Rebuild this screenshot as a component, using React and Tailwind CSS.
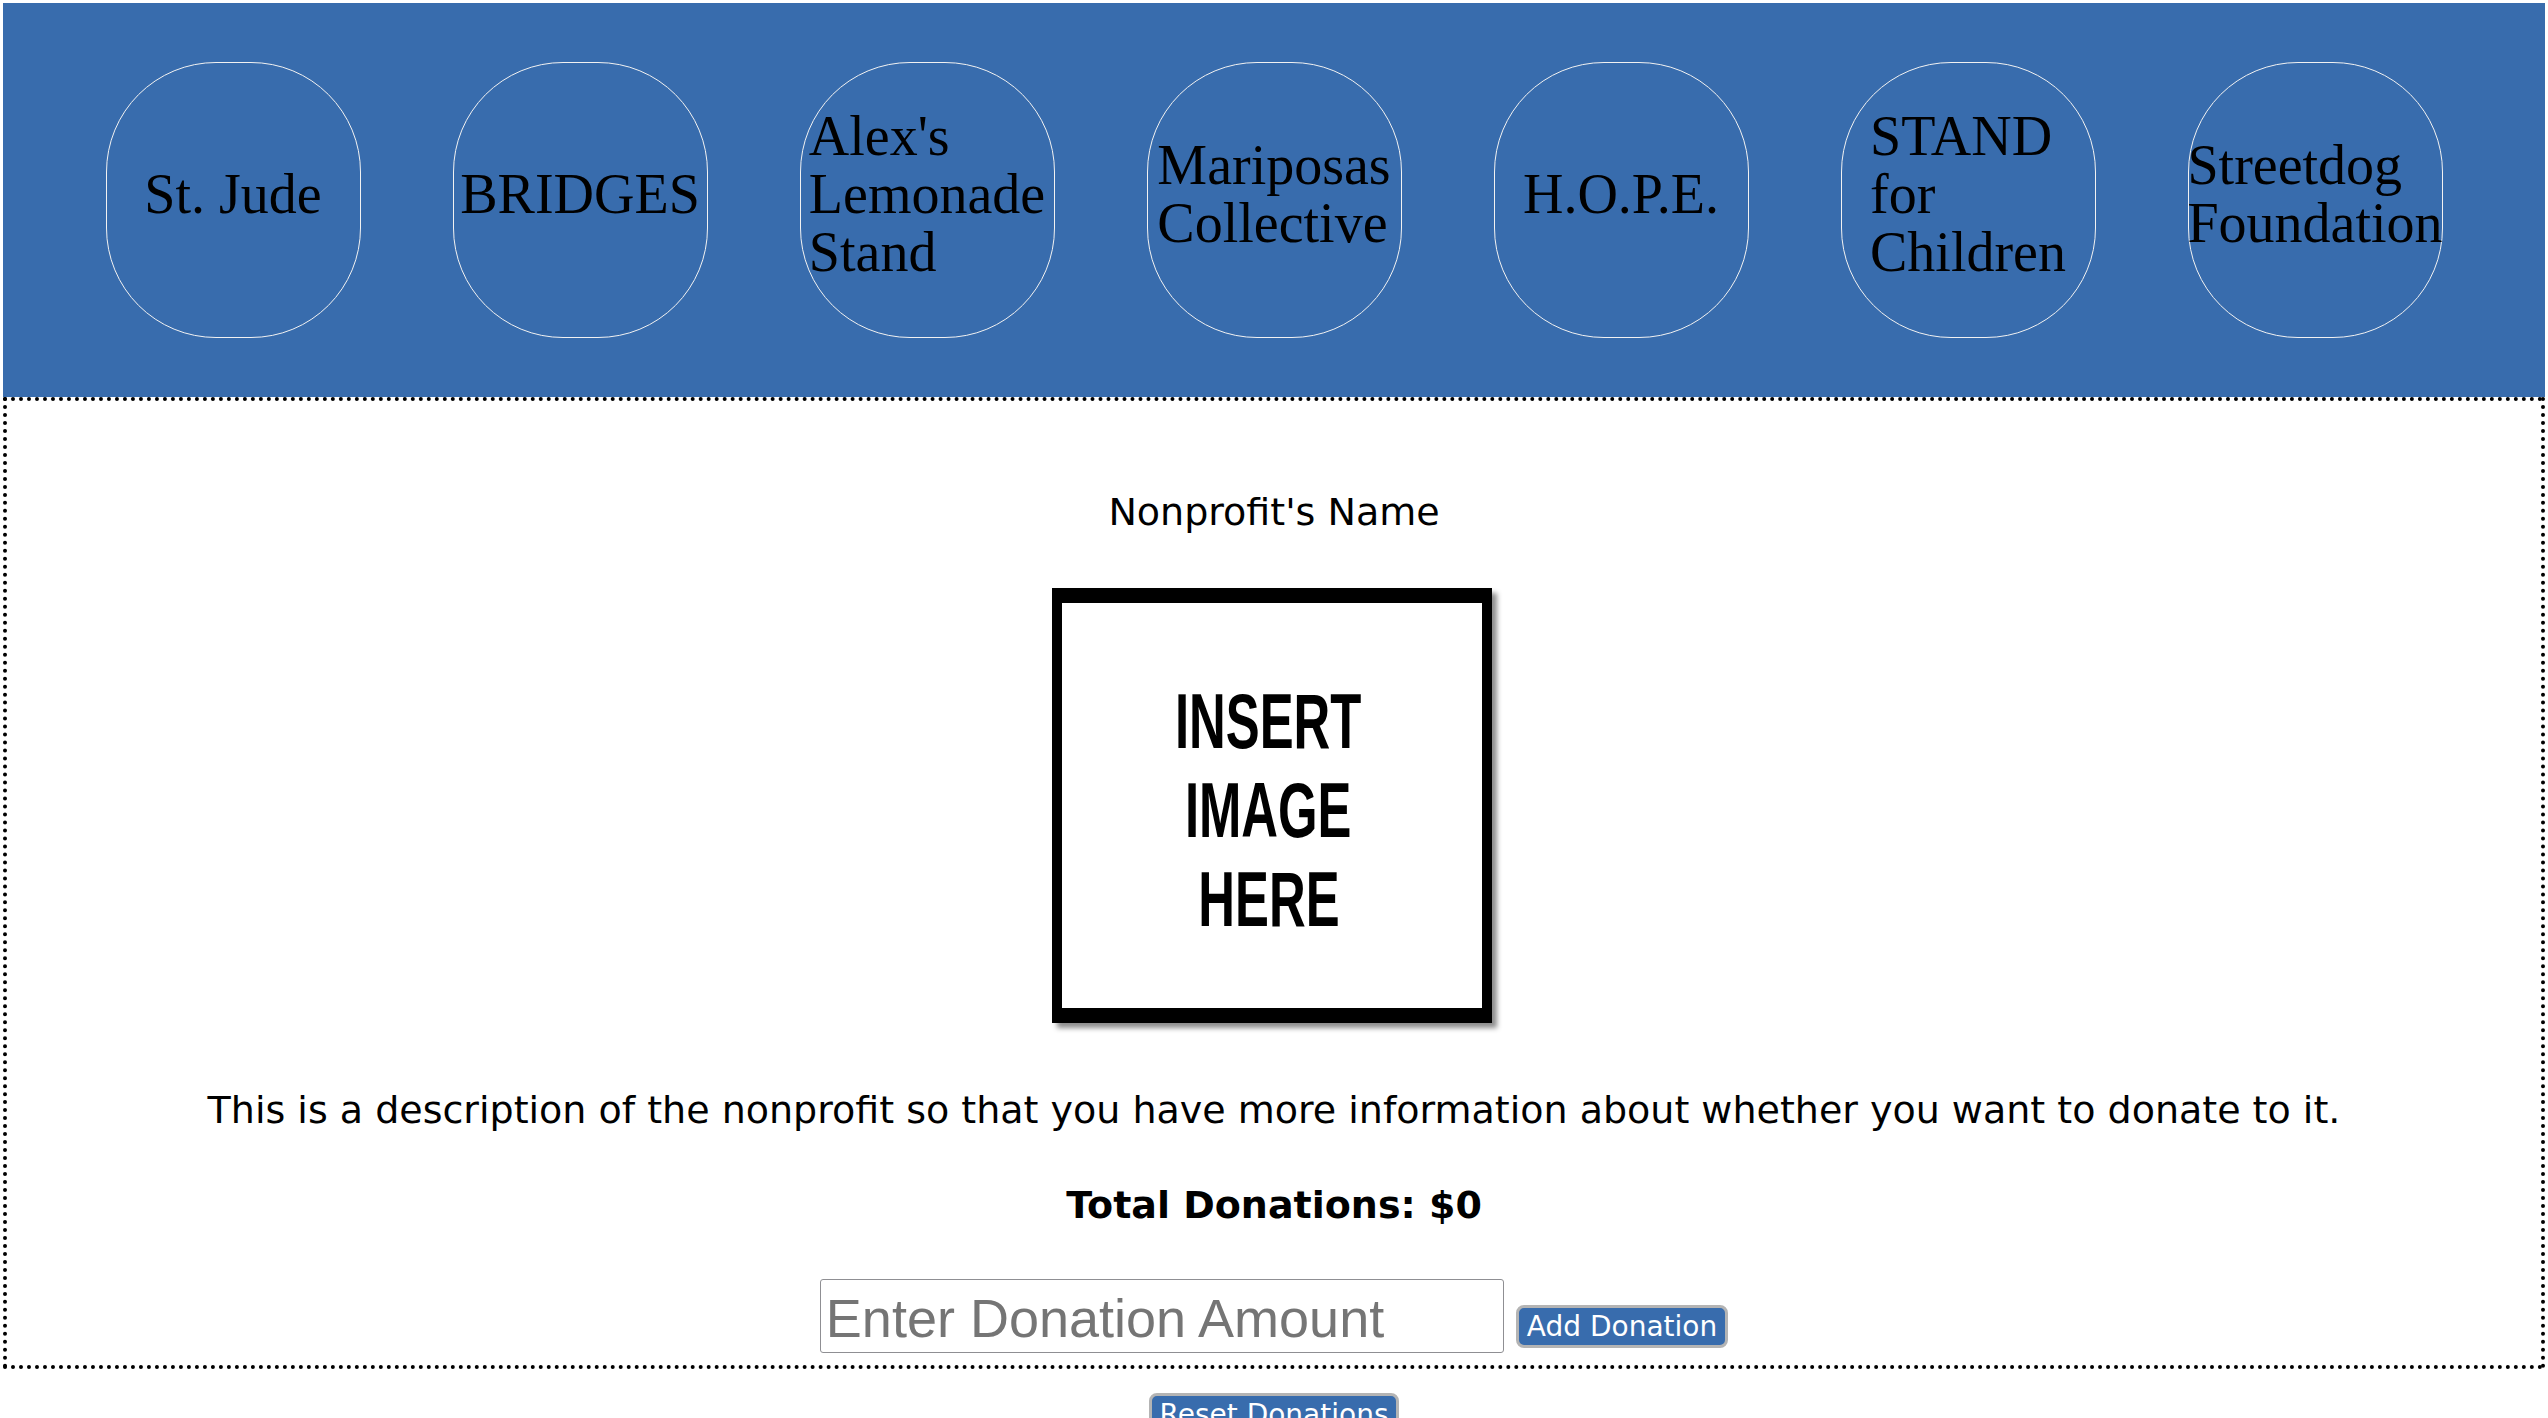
import React, { useState } from "react";

const NONPROFITS = [
  { id: "stjude", lines: ["St. Jude"] },
  { id: "bridges", lines: ["BRIDGES"] },
  { id: "alex", lines: ["Alex's", "Lemonade", "Stand"] },
  { id: "mariposas", lines: ["Mariposas", "Collective"] },
  { id: "hope", lines: ["H.O.P.E."] },
  { id: "stand", lines: ["STAND", "for", "Children"] },
  { id: "streetdog", lines: ["Streetdog", "Foundation"] },
];

const verdana = "font-['DejaVu_Sans','Liberation_Sans',sans-serif]";

function NonprofitButton({ np, onSelect }) {
  return (
    <button
      type="button"
      onClick={() => onSelect(np.id)}
      className="w-[255px] h-[276px] shrink-0 rounded-[110px] border border-[#f2f2f2] flex items-center justify-center pb-3 bg-transparent"
    >
      <span className="inline-block text-left text-black font-['Liberation_Serif',serif] text-[56px] leading-[58px] whitespace-nowrap">
        {np.lines.map((l) => (
          <span key={l} className="block">{l}</span>
        ))}
      </span>
    </button>
  );
}

export default function App() {
  const [selected, setSelected] = useState(null);
  const [amount, setAmount] = useState("");
  const [total, setTotal] = useState(0);

  function addDonation() {
    const n = parseFloat(amount);
    if (!isNaN(n) && n > 0) setTotal((t) => t + n);
    setAmount("");
  }

  return (
    <div className="min-h-screen bg-white px-[3px] pt-[3px]">
      {/* Nonprofit picker */}
      <div className="h-[394px] bg-[#386cad] flex items-center justify-center gap-[92px]">
        {NONPROFITS.map((np) => (
          <NonprofitButton key={np.id} np={np} onSelect={setSelected} />
        ))}
      </div>

      {/* Detail panel */}
      <div className={`border-[4px] border-dotted border-black flex flex-col items-center pt-[89px] pb-[12px] text-black ${verdana}`}>
        <div className="text-[38px] leading-[44px]">Nonprofit's Name</div>

        <div className="mt-[54px] mr-[5px] w-[440px] h-[435px] bg-white border-x-[10px] border-y-[15px] border-black shadow-[5px_5px_5px_rgba(0,0,0,0.45)] flex flex-col items-center justify-center pt-[10px] pr-[6px]">
          {["INSERT", "IMAGE", "HERE"].map((w) => (
            <div
              key={w}
              className="font-['Liberation_Sans',sans-serif] font-bold text-[77px] leading-[89px] scale-x-[0.66]"
            >
              {w}
            </div>
          ))}
        </div>

        <p className="mt-[65px] text-[38px] leading-[44px]">
          This is a description of the nonprofit so that you have more information about whether you want to donate to it.
        </p>

        <div className="mt-[51px] text-[38px] leading-[44px] font-bold">Total Donations: ${total}</div>

        <div className="mt-[52px] flex items-end gap-[12px]">
          <input
            type="text"
            value={amount}
            onChange={(e) => setAmount(e.target.value)}
            placeholder="Enter Donation Amount"
            className="w-[684px] h-[74px] border border-[#8f8f93] rounded-[3px] px-[5px] pt-[4px] font-['Liberation_Sans',sans-serif] text-[54px] text-black placeholder:text-[#757575] outline-none"
          />
          <button
            type="button"
            onClick={addDonation}
            className="mb-[5px] h-[43px] px-[8px] rounded-[8px] border-[3px] border-[#b4b4b4] bg-[#386cad] text-white text-[28px] leading-[30px]"
          >
            Add Donation
          </button>
        </div>
      </div>

      <div className={`flex justify-center mt-[24px] ${verdana}`}>
        <button
          type="button"
          onClick={() => setTotal(0)}
          className="h-[43px] w-[250px] rounded-[8px] border-[3px] border-[#b4b4b4] bg-[#386cad] text-white text-[28px] leading-[30px]"
        >
          Reset Donations
        </button>
      </div>
    </div>
  );
}
